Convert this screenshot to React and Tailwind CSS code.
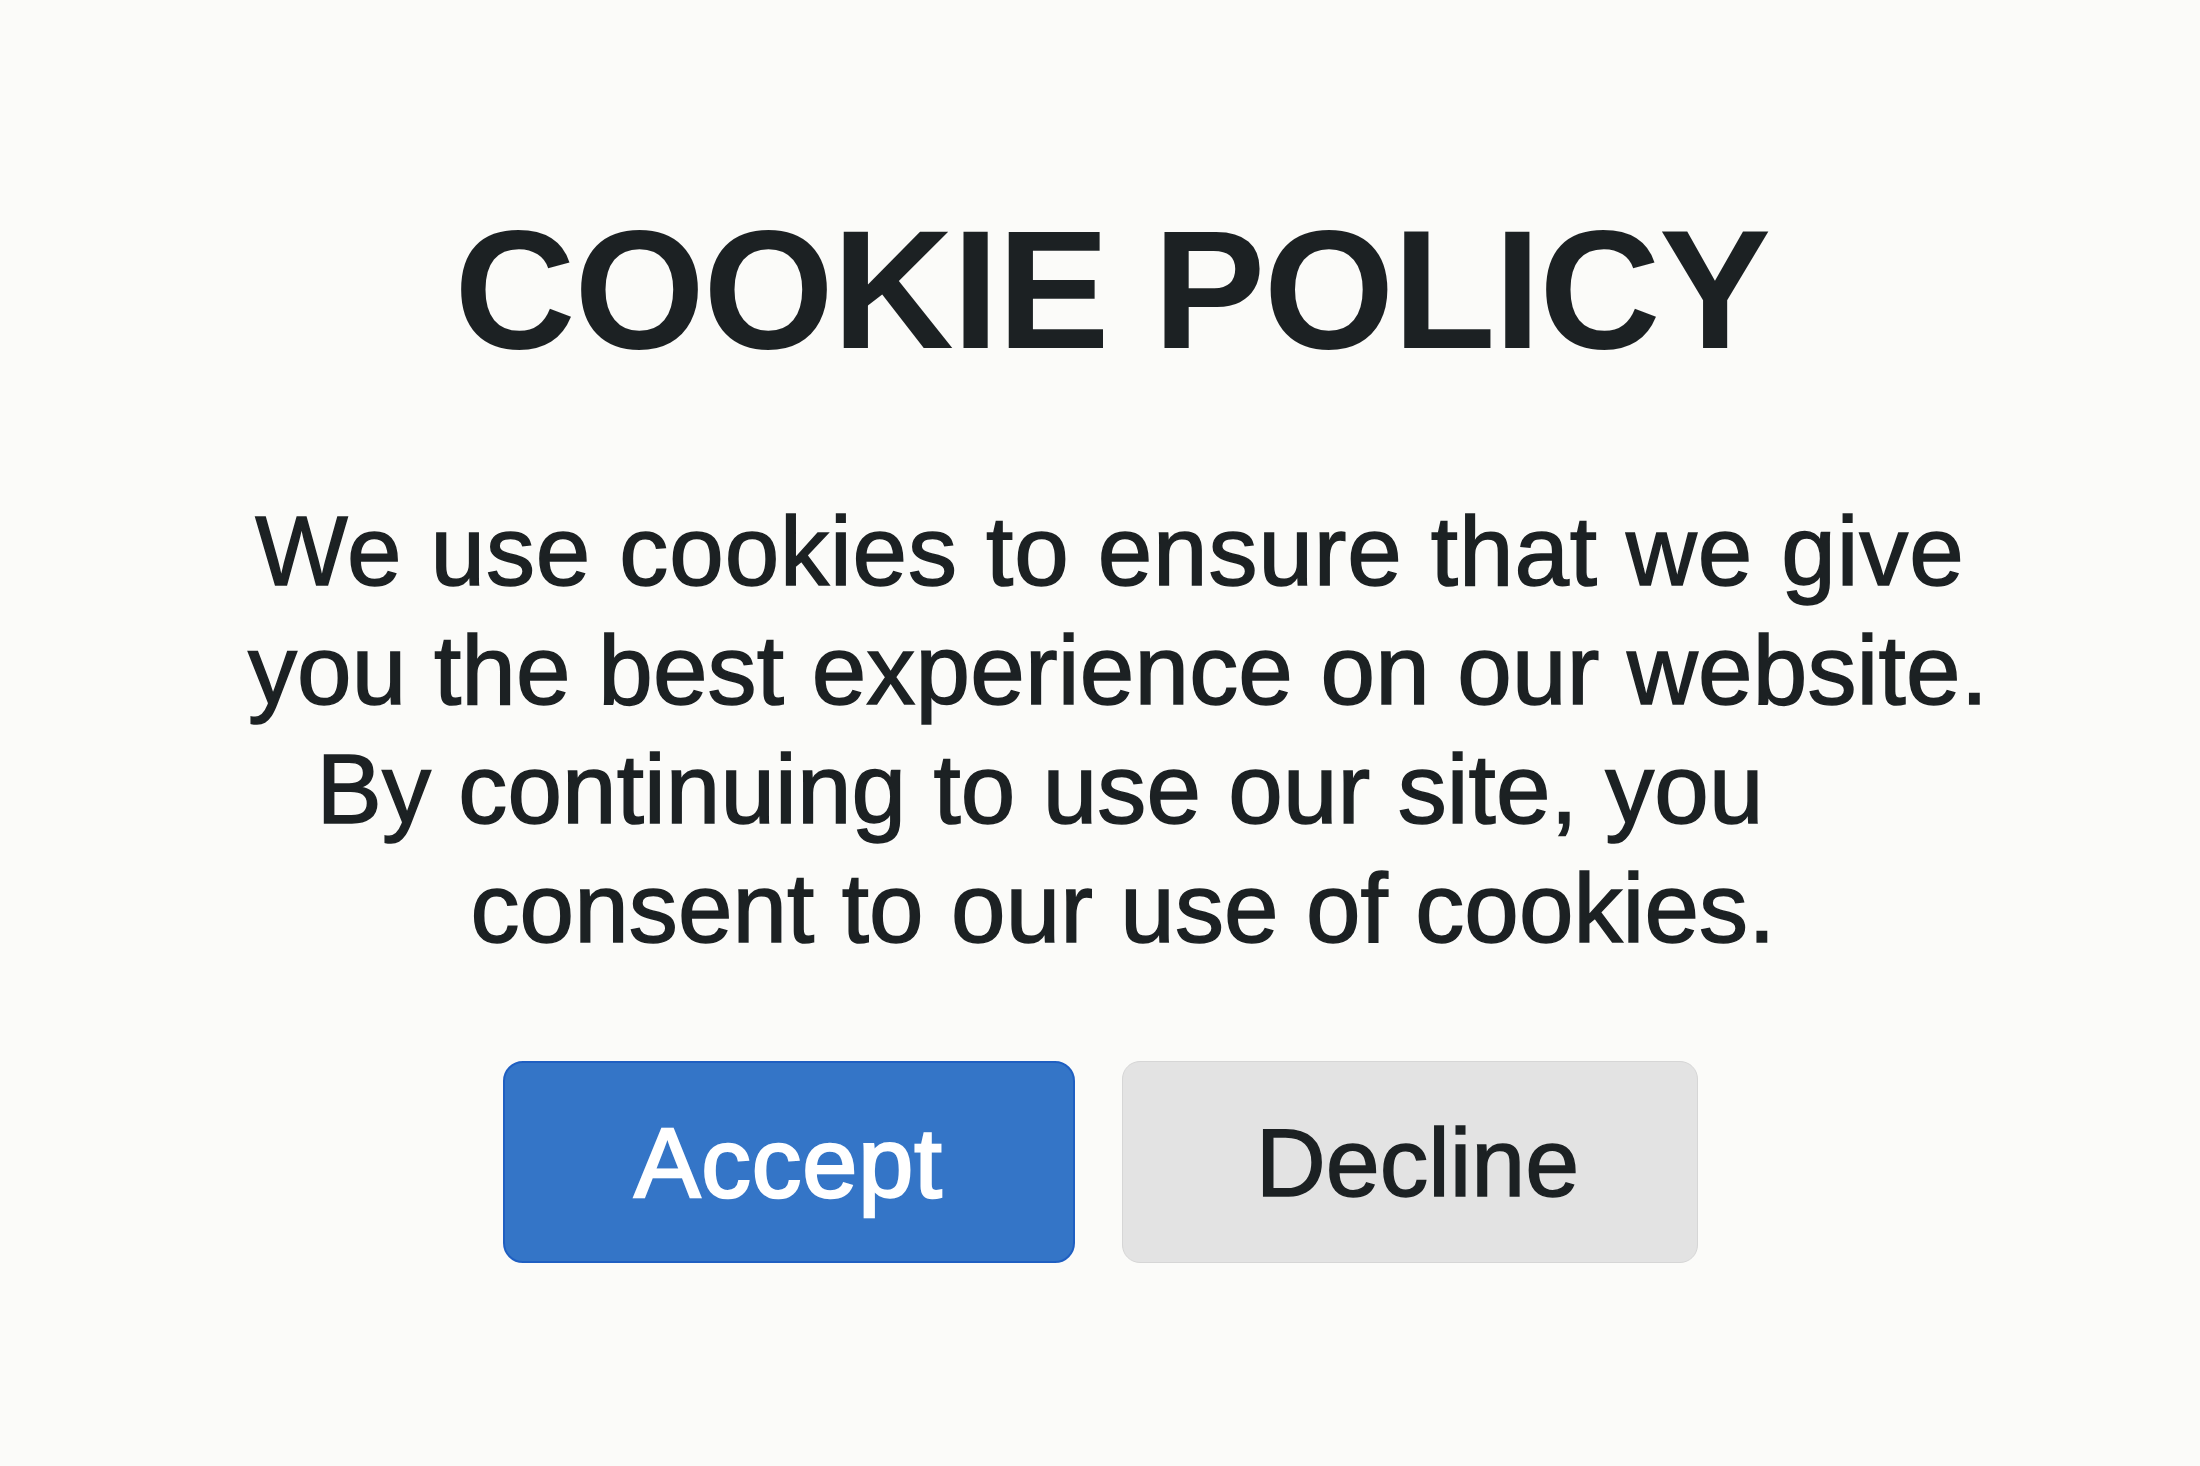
export default function App() {
  const font = { fontFamily: '"Liberation Sans", Arial, Helvetica, sans-serif' };
  return (
    <div
      className="w-full min-h-[1466px] bg-[#fbfbf9] text-[#1c2123] flex flex-col items-center pt-[206px]"
      style={font}
    >
      <h1 className="text-[168px] leading-[168px] font-bold tracking-[-1.5px] pl-[24px] whitespace-nowrap">
        COOKIE POLICY
      </h1>
      <div className="mt-[118px] flex flex-col items-center text-[98px] leading-[119px] whitespace-nowrap [-webkit-text-stroke:1.5px_#1c2123]">
        <div className="pl-[20px] tracking-[0.9px]">We use cookies to ensure that we give</div>
        <div className="pl-[36px] tracking-[0.2px]">you the best experience on our website.</div>
        <div className="pr-[120px] tracking-[0.1px]">By continuing to use our site, you</div>
        <div className="pl-[46px] tracking-[0.1px]">consent to our use of cookies.</div>
      </div>
      <div className="mt-[93px] flex flex-row gap-[47px]">
        <button className="w-[572px] h-[202px] rounded-[20px] bg-[#3475c7] border-2 border-[#1f5fc2] text-white text-[99px] leading-none tracking-[1px] flex items-center justify-center [-webkit-text-stroke:2.5px_#ffffff]">
          Accept
        </button>
        <button className="w-[576px] h-[202px] rounded-[18px] bg-[#e3e3e3] border border-[#d6d6d6] text-[#1c2123] text-[97px] leading-none flex items-center justify-center pl-[16px] [-webkit-text-stroke:1.5px_#1c2123]">
          Decline
        </button>
      </div>
    </div>
  );
}
